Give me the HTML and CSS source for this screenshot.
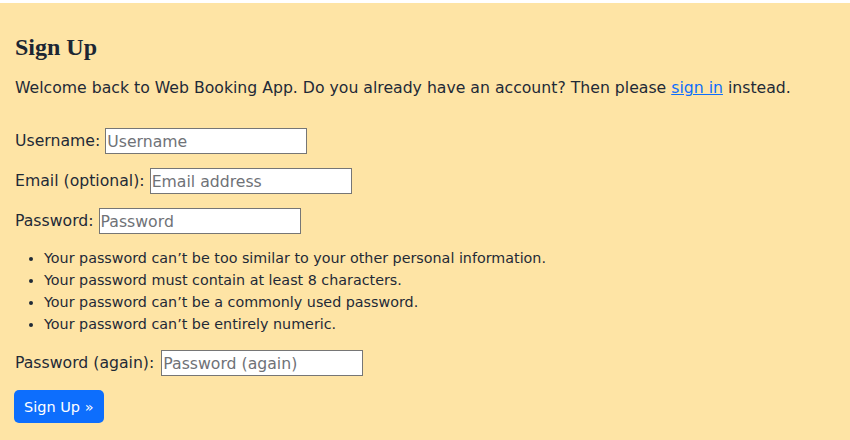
FILE: index.html
```html
<!DOCTYPE html>
<html lang="en">
<head>
<meta charset="utf-8">
<title>Sign Up</title>
<link rel="stylesheet" href="styles.css">
</head>
<body>
<main class="page">
  <h1 class="title">Sign Up</h1>
  <p class="intro">Welcome back to Web Booking App. Do you already have an account? Then please <a href="#" class="link">sign in</a> instead.</p>
  <form class="form">
    <p class="row"><label for="u">Username:</label> <input id="u" class="field" type="text" placeholder="Username"></p>
    <p class="row"><label for="e">Email (optional):</label> <input id="e" class="field" type="email" placeholder="Email address"></p>
    <p class="row row-tight"><label for="p1">Password:</label> <input id="p1" class="field" type="password" placeholder="Password"></p>
    <ul class="help">
      <li>Your password can’t be too similar to your other personal information.</li>
      <li>Your password must contain at least 8 characters.</li>
      <li>Your password can’t be a commonly used password.</li>
      <li>Your password can’t be entirely numeric.</li>
    </ul>
    <p class="row"><label for="p2">Password (again):</label> <input id="p2" class="field field-wide" type="password" placeholder="Password (again)"></p>
    <button class="btn" type="submit">Sign Up »</button>
  </form>
</main>
</body>
</html>
```
FILE: styles.css
```css
html, body {
  margin: 0;
  padding: 0;
  background: #ffffff;
}
body {
  padding-top: 3px;
  font-family: "DejaVu Sans", sans-serif;
  color: #1f2a37;
}
.page {
  background: #fee4a5;
  min-height: 437px;
  padding: 28px 14px 0 15px;
  box-sizing: border-box;
}
.title {
  font-family: "Liberation Serif", serif;
  font-weight: bold;
  font-size: 24px;
  line-height: 32px;
  margin: 0 0 13px;
  color: #1c2633;
}
.intro {
  font-size: 15.7px;
  line-height: 24px;
  margin: 0 0 28px;
}
.link {
  color: #0d6efd;
}
.form { margin: 0; }
.row {
  font-size: 15.7px;
  line-height: 24px;
  margin: 0 0 14px;
}
.row-tight { margin-bottom: 13px; }
.field {
  width: 202px;
  height: 26px;
  box-sizing: border-box;
  border: 1px solid #767676;
  padding: 1px 1px;
  font-family: inherit;
  font-size: 15.7px;
  color: #1f2a37;
  background: #fff;
  vertical-align: middle;
}
.field-wide { margin-left: 2px; }
.field::placeholder { color: #6f7277; }
.help {
  font-size: 14.3px;
  line-height: 22px;
  margin: 0 0 15px;
  padding-left: 29px;
}
.btn {
  background: #0d6efd;
  color: #fff;
  border: 0;
  border-radius: 5px;
  font-family: inherit;
  font-size: 14.5px;
  height: 33px;
  padding: 0 10px;
  margin-left: -1px;
}
```
